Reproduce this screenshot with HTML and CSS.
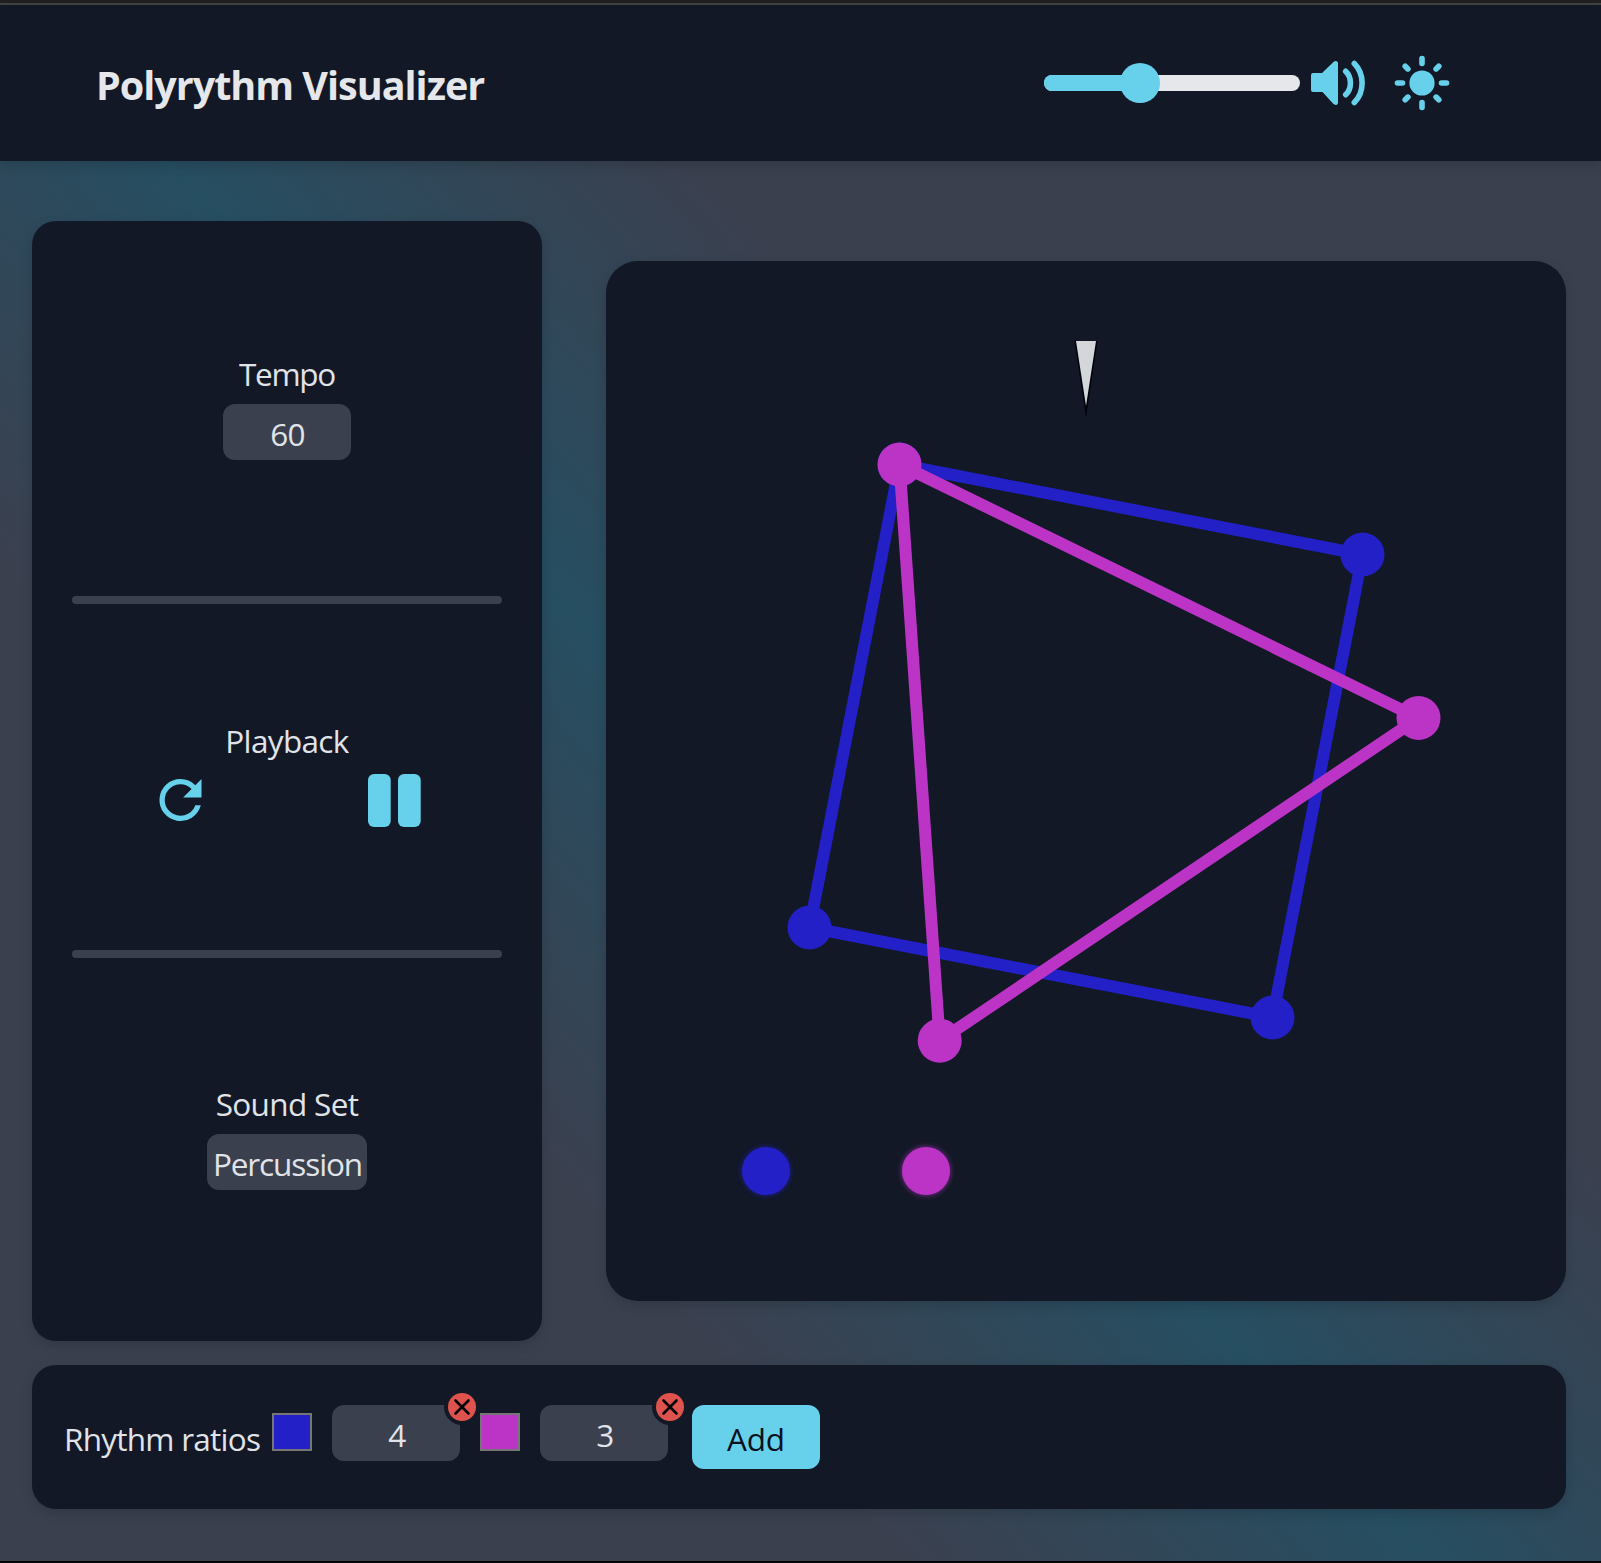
FILE: index.html
```html
<!DOCTYPE html>
<html lang="en">
<head>
<meta charset="utf-8">
<title>Polyrythm Visualizer</title>
<link rel="stylesheet" href="styles.css">
</head>
<body>
<div class="app">
  <header class="header">
    <h1 class="title">Polyrythm Visualizer</h1>
    <div class="header-controls">
      <div class="slider"><div class="slider-fill"></div><div class="slider-thumb"></div></div>
      <svg class="icon-volume" viewBox="0 0 54 44">
        <path class="fill" d="M2 12H11L22.500 0.900Q24 -.3 25.800 .3Q27 .8 27 2.500V41.500Q27 43.200 25.800 43.700Q24 44.300 22.500 43.100L11.500 31H2Q0 31 0 29V14Q0 12 2 12Z"/>
        <path class="stroke" d="M34.700 10.300C41 16 41 28 34.700 33.700M43.300 2.500C53.700 13 53.700 31 43.300 41.500"/>
      </svg>
      <svg class="icon-sun" viewBox="0 0 54 54">
        <circle class="fill" cx="27" cy="27" r="12.600"/>
        <path class="stroke" d="M27 2.500V7.500M27 46.500V51.500M2.500 27H7.500M46.500 27H51.500M10.200 10.200L12.900 12.900M41.100 41.100L43.800 43.800M10.200 43.800L12.900 41.100M41.100 12.900L43.800 10.200"/>
      </svg>
    </div>
  </header>
  <main class="main">
    <section class="panel controls">
      <div class="group group-tempo"><label class="label tempo-label">Tempo</label><div class="field">60</div></div>
      <div class="divider"></div>
      <div class="group group-playback">
        <span class="label playback-label">Playback</span>
        <div class="buttons">
          <svg class="icon-restart" viewBox="0 0 24 24"><path class="fill" d="M17.650 6.350A7.960 7.960 0 0 0 12 4a8 8 0 1 0 7.730 10h-2.080A6 6 0 1 1 12 6c1.660 0 3.140.690 4.220 1.780L13 11h7V4z"/></svg>
          <svg class="icon-pause" viewBox="0 0 53 53"><rect class="fill" width="22.700" height="53" rx="6"/><rect class="fill" x="30" width="22.700" height="53" rx="6"/></svg>
        </div>
      </div>
      <div class="divider"></div>
      <div class="group group-sound"><label class="label">Sound Set</label><div class="field field-wide">Percussion</div></div>
    </section>
    <section class="panel stage">
      <svg class="canvas" viewBox="606 261 960 1040">
        <defs>
          <filter id="glow" x="-50%" y="-50%" width="200%" height="200%"><feGaussianBlur stdDeviation="2.500"/></filter>
        </defs>
        <path class="needle-shadow" d="M1074.500 341H1097.500L1086 418Z"/>
        <path class="needle" d="M1076 341H1096L1086 406Z"/>
        <g class="blue">
          <path class="shape" d="M899.500 464.500L1362.500 554.500L1272.500 1017.500L809.500 927.500Z"/>
          <circle cx="899.500" cy="464.500" r="22"/><circle cx="1362.500" cy="554.500" r="22"/><circle cx="1272.500" cy="1017.500" r="22"/><circle cx="809.500" cy="927.500" r="22"/>
        </g>
        <g class="purple">
          <path class="shape" d="M899.500 464.500L1418.500 718L939.700 1040.700Z"/>
          <circle cx="899.500" cy="464.500" r="22"/><circle cx="1418.500" cy="718" r="22"/><circle cx="939.700" cy="1040.700" r="22"/>
        </g>
        <g class="blue"><circle class="halo" cx="766" cy="1171" r="25"/><circle cx="766" cy="1171" r="24"/></g>
        <g class="purple"><circle class="halo" cx="926" cy="1171" r="25"/><circle cx="926" cy="1171" r="24"/></g>
      </svg>
    </section>
  </main>
  <section class="panel ratios">
    <span class="ratios-label">Rhythm ratios</span>
    <div class="swatch swatch-blue"></div>
    <div class="field ratio">4<span class="remove"><svg viewBox="0 0 28 28"><path d="M7.500 7.500L20.500 20.500M20.500 7.500L7.500 20.500"/></svg></span></div>
    <div class="swatch swatch-purple"></div>
    <div class="field ratio">3<span class="remove"><svg viewBox="0 0 28 28"><path d="M7.500 7.500L20.500 20.500M20.500 7.500L7.500 20.500"/></svg></span></div>
    <button class="add">Add</button>
  </section>
</div>
</body>
</html>
```
FILE: styles.css
```css
* { box-sizing: border-box; }
body { margin: 0; font-family: "Open Sans", "Noto Sans", sans-serif; font-size: 31.5px; letter-spacing: -.65px; color: #e0e3e8; }
svg { display: block; flex: none; overflow: visible; }
.fill { fill: #67d1ec; }
.stroke { fill: none; stroke: #67d1ec; stroke-width: 5.6; stroke-linecap: round; }

.app {
  height: 1563px;
  display: flex;
  flex-direction: column;
  border-top: 3px solid #202020;
  border-bottom: 2px solid #000;
  background: linear-gradient(48deg, #3b404f 30%, #264e61 47.5%, #3b404f 65%);
}
.header {
  height: 158px;
  flex: none;
  border-top: 2px solid #404040;
  background: #121826;
  display: flex;
  justify-content: space-between;
  align-items: center;
  padding: 0 152px 0 96px;
  box-shadow: 0 4px 12px rgba(0, 0, 0, .15);
}
.title { margin: 3px 0 0; font-size: 39.5px; line-height: 56px; letter-spacing: -1px; font-weight: 700; white-space: nowrap; color: #e5e7eb; }
.header-controls { display: flex; align-items: center; }
.slider { width: 256px; height: 16px; border-radius: 8px; background: #e5e7eb; display: flex; align-items: center; }
.slider-fill { width: 96px; height: 16px; border-radius: 8px 0 0 8px; background: #67d1ec; }
.slider-thumb { width: 40px; height: 40px; margin-left: -20px; border-radius: 50%; background: #67d1ec; flex: none; }
.icon-volume { width: 54px; height: 44px; margin-left: 11px; }
.icon-sun { width: 54px; height: 54px; margin-left: 30px; }

.panel { background: #121826; border-radius: 24px; box-shadow: 0 4px 12px rgba(0, 0, 0, .15); }
.main { display: flex; align-items: center; gap: 64px; padding: 60px 35px 0 32px; }
.controls { width: 510px; height: 1120px; padding: 0 40px; display: flex; flex-direction: column; }
.group { display: flex; flex-direction: column; align-items: center; }
.group-tempo { height: 375px; padding-top: 131px; }
.group-playback { height: 346px; padding-top: 115px; }
.group-sound { padding-top: 124px; }
.label { height: 48px; line-height: 44px; margin-bottom: 4px; white-space: nowrap; }
.tempo-label { letter-spacing: -1.3px; }
.playback-label { margin-bottom: 1px; }
.divider { height: 8px; border-radius: 4px; background: #3b404f; flex: none; }
.field { width: 128px; height: 56px; border-radius: 12px; background: #3b404f; display: flex; align-items: center; justify-content: center; padding: 3px 0 0 1px; }
.field-wide { width: 160px; letter-spacing: -1.1px; }
.buttons { width: 272px; margin-right: 4px; display: flex; justify-content: space-between; align-items: center; }
.icon-restart { width: 63px; height: 64px; }
.icon-pause { width: 53px; height: 53px; }

.stage { width: 960px; height: 1040px; border-radius: 32px; }
.canvas { width: 960px; height: 1040px; }
.needle { fill: #d4d6da; }
.needle-shadow { fill: #02030d; }
.shape { fill: none; stroke-width: 12; }
.blue { fill: #2220c6; }
.blue .shape { fill: none; stroke: #2220c6; }
.purple { fill: #bb34c6; }
.purple .shape { fill: none; stroke: #bb34c6; }
.halo { filter: url(#glow); opacity: .5; }

.ratios { height: 144px; margin: 24px 35px 0 32px; padding: 40px 32px 0; display: flex; align-items: flex-start; }
.ratios-label { width: 208px; line-height: 44px; margin-top: 12px; letter-spacing: -.75px; white-space: nowrap; }
.swatch { width: 40px; height: 38px; margin-top: 8px; border: 2px solid #767676; }
.swatch-blue { background: #2220c6; }
.swatch-purple { background: #bb34c6; }
.ratio { position: relative; margin: 0 20px; padding-left: 2px; }
.remove { position: absolute; top: -16px; right: -20px; width: 36px; height: 36px; border: 4px solid #121826; border-radius: 50%; background: #e0524d; }
.remove path { fill: none; stroke: #000; stroke-width: 2.600; stroke-linecap: round; }
.add { width: 128px; height: 64px; margin-left: 4px; padding: 2px 0 0; border: 0; border-radius: 12px; background: #67d1ec; color: #0b1020; font: inherit; letter-spacing: -.2px; }
```
